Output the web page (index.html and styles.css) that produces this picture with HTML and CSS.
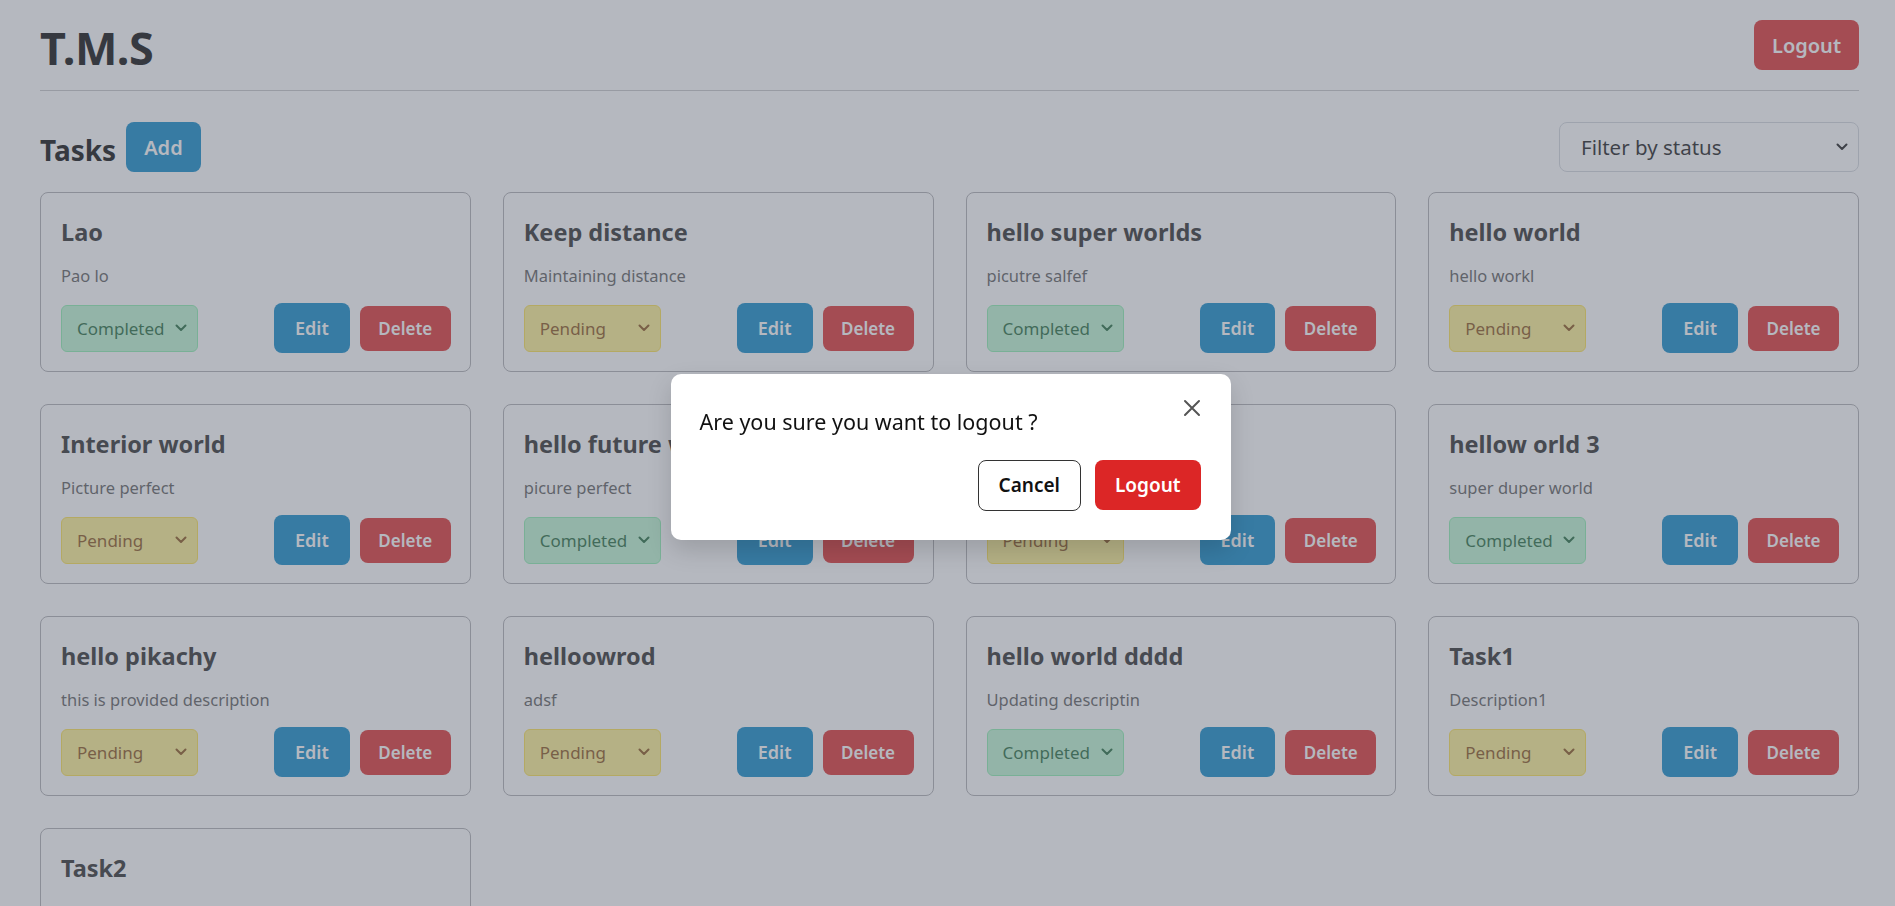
FILE: index.html
```html
<!DOCTYPE html>
<html lang="en">
<head>
<meta charset="utf-8">
<title>T.M.S</title>
<link rel="stylesheet" href="styles.css">
</head>
<body>
<div class="page">
  <header class="topbar">
    <h1 class="brand">T.M.S</h1>
    <button class="btn btn-red btn-lg">Logout</button>
  </header>

  <section class="toolbar">
    <div class="toolbar-left">
      <h2 class="section-title">Tasks</h2>
      <button class="btn btn-blue btn-lg">Add</button>
    </div>
    <select class="filter">
      <option>Filter by status</option>
      <option>Pending</option>
      <option>Completed</option>
    </select>
  </section>

  <div class="grid">
    <div class="card">
      <h3 class="card-title">Lao</h3>
      <p class="card-desc">Pao lo</p>
      <div class="card-actions">
        <select class="status status-done"><option>Completed</option><option>Pending</option></select>
        <div class="btn-group"><button class="btn btn-blue btn-edit">Edit</button><button class="btn btn-red btn-delete">Delete</button></div>
      </div>
    </div>
    <div class="card">
      <h3 class="card-title">Keep distance</h3>
      <p class="card-desc">Maintaining distance</p>
      <div class="card-actions">
        <select class="status status-pending"><option>Pending</option><option>Completed</option></select>
        <div class="btn-group"><button class="btn btn-blue btn-edit">Edit</button><button class="btn btn-red btn-delete">Delete</button></div>
      </div>
    </div>
    <div class="card">
      <h3 class="card-title">hello super worlds</h3>
      <p class="card-desc">picutre salfef</p>
      <div class="card-actions">
        <select class="status status-done"><option>Completed</option><option>Pending</option></select>
        <div class="btn-group"><button class="btn btn-blue btn-edit">Edit</button><button class="btn btn-red btn-delete">Delete</button></div>
      </div>
    </div>
    <div class="card">
      <h3 class="card-title">hello world</h3>
      <p class="card-desc">hello workl</p>
      <div class="card-actions">
        <select class="status status-pending"><option>Pending</option><option>Completed</option></select>
        <div class="btn-group"><button class="btn btn-blue btn-edit">Edit</button><button class="btn btn-red btn-delete">Delete</button></div>
      </div>
    </div>

    <div class="card">
      <h3 class="card-title">Interior world</h3>
      <p class="card-desc">Picture perfect</p>
      <div class="card-actions">
        <select class="status status-pending"><option>Pending</option><option>Completed</option></select>
        <div class="btn-group"><button class="btn btn-blue btn-edit">Edit</button><button class="btn btn-red btn-delete">Delete</button></div>
      </div>
    </div>
    <div class="card">
      <h3 class="card-title">hello future world</h3>
      <p class="card-desc">picure perfect</p>
      <div class="card-actions">
        <select class="status status-done"><option>Completed</option><option>Pending</option></select>
        <div class="btn-group"><button class="btn btn-blue btn-edit">Edit</button><button class="btn btn-red btn-delete">Delete</button></div>
      </div>
    </div>
    <div class="card">
      <h3 class="card-title">hello world 2</h3>
      <p class="card-desc">another description</p>
      <div class="card-actions">
        <select class="status status-pending"><option>Pending</option><option>Completed</option></select>
        <div class="btn-group"><button class="btn btn-blue btn-edit">Edit</button><button class="btn btn-red btn-delete">Delete</button></div>
      </div>
    </div>
    <div class="card">
      <h3 class="card-title">hellow orld 3</h3>
      <p class="card-desc">super duper world</p>
      <div class="card-actions">
        <select class="status status-done"><option>Completed</option><option>Pending</option></select>
        <div class="btn-group"><button class="btn btn-blue btn-edit">Edit</button><button class="btn btn-red btn-delete">Delete</button></div>
      </div>
    </div>

    <div class="card">
      <h3 class="card-title">hello pikachy</h3>
      <p class="card-desc">this is provided description</p>
      <div class="card-actions">
        <select class="status status-pending"><option>Pending</option><option>Completed</option></select>
        <div class="btn-group"><button class="btn btn-blue btn-edit">Edit</button><button class="btn btn-red btn-delete">Delete</button></div>
      </div>
    </div>
    <div class="card">
      <h3 class="card-title">helloowrod</h3>
      <p class="card-desc">adsf</p>
      <div class="card-actions">
        <select class="status status-pending"><option>Pending</option><option>Completed</option></select>
        <div class="btn-group"><button class="btn btn-blue btn-edit">Edit</button><button class="btn btn-red btn-delete">Delete</button></div>
      </div>
    </div>
    <div class="card">
      <h3 class="card-title">hello world dddd</h3>
      <p class="card-desc">Updating descriptin</p>
      <div class="card-actions">
        <select class="status status-done"><option>Completed</option><option>Pending</option></select>
        <div class="btn-group"><button class="btn btn-blue btn-edit">Edit</button><button class="btn btn-red btn-delete">Delete</button></div>
      </div>
    </div>
    <div class="card">
      <h3 class="card-title">Task1</h3>
      <p class="card-desc">Description1</p>
      <div class="card-actions">
        <select class="status status-pending"><option>Pending</option><option>Completed</option></select>
        <div class="btn-group"><button class="btn btn-blue btn-edit">Edit</button><button class="btn btn-red btn-delete">Delete</button></div>
      </div>
    </div>

    <div class="card">
      <h3 class="card-title">Task2</h3>
      <p class="card-desc">Description2</p>
      <div class="card-actions">
        <select class="status status-pending"><option>Pending</option><option>Completed</option></select>
        <div class="btn-group"><button class="btn btn-blue btn-edit">Edit</button><button class="btn btn-red btn-delete">Delete</button></div>
      </div>
    </div>
  </div>
</div>

<div class="overlay"></div>
<div class="modal-wrap">
  <div class="modal">
    <div class="modal-head">
      <p class="modal-text">Are you sure you want to logout ?</p>
      <button class="modal-close" aria-label="Close">
        <svg width="18" height="18" viewBox="0 0 18 18" fill="none" stroke="#555" stroke-width="2" stroke-linecap="round"><path d="M2 2 L16 16 M16 2 L2 16"/></svg>
      </button>
    </div>
    <div class="modal-actions">
      <button class="btn btn-outline">Cancel</button>
      <button class="btn btn-danger">Logout</button>
    </div>
  </div>
</div>
</body>
</html>
```

FILE: styles.css
```css
* { box-sizing: border-box; }

html, body {
  margin: 0;
  overflow: hidden;
  background: #ffffff;
  font-family: "Noto Sans", "Open Sans", sans-serif;
  color: #111;
}

.page {
  padding: 0 36px 0 40px;
}

.topbar {
  display: flex;
  justify-content: space-between;
  align-items: center;
  padding: 20px 0;
  border-bottom: 1px solid #c4c4c6;
}

.brand {
  margin: 6px 0 0;
  font-size: 45px;
  line-height: 44px;
  font-weight: 700;
  color: #000;
  letter-spacing: -0.5px;
}

.btn {
  font-family: inherit;
  border: none;
  cursor: pointer;
  color: #fff;
  font-weight: 600;
}

.btn-lg {
  height: 50px;
  padding: 0 18px;
  font-size: 20px;
  border-radius: 8px;
}

.btn-red { background: #dc2626; }
.btn-blue { background: #0284c7; }

.toolbar {
  margin-top: 31px;
  display: flex;
  justify-content: space-between;
  align-items: center;
}

.toolbar-left {
  display: flex;
  align-items: center;
  gap: 10px;
}

.section-title {
  margin: 0;
  padding-top: 5px;
  font-size: 28px;
  line-height: 40px;
  font-weight: 700;
  color: #000;
}

.filter {
  appearance: none;
  -webkit-appearance: none;
  width: 300px;
  height: 50px;
  padding: 0 40px 0 21px;
  font-family: inherit;
  font-size: 20.5px;
  color: #111;
  background: #fff url("data:image/svg+xml,%3Csvg xmlns='http://www.w3.org/2000/svg' width='12' height='8' viewBox='0 0 12 8'%3E%3Cpath d='M1.5 1.5 L6 6 L10.5 1.5' fill='none' stroke='%23111' stroke-width='2' stroke-linecap='round' stroke-linejoin='round'/%3E%3C/svg%3E") no-repeat right 10px center;
  border: 1px solid #d1d5db;
  border-radius: 8px;
}

.grid {
  margin-top: 20px;
  display: grid;
  grid-template-columns: repeat(4, 1fr);
  gap: 32px;
}

.card {
  border: 1px solid #aaaaae;
  border-radius: 8px;
  padding: 23px 19px 18px 20px;
  background: #fff;
}

.card-title {
  margin: 0 0 14px;
  font-size: 23.5px;
  line-height: 32px;
  font-weight: 700;
  color: #222;
}

.card-desc {
  margin: 0 0 13px;
  font-size: 16.5px;
  line-height: 28px;
  color: #555;
}

.card-actions {
  display: flex;
  justify-content: space-between;
  align-items: center;
  height: 50px;
}

.status {
  appearance: none;
  -webkit-appearance: none;
  width: 137px;
  height: 47px;
  padding: 0 26px 0 15px;
  font-family: inherit;
  font-size: 17px;
  border-radius: 6px;
  background-repeat: no-repeat;
  background-position: right 10px center;
}

.status-done {
  background-color: #bbf7d0;
  border: 1px solid #86efac;
  color: #166534;
  background-image: url("data:image/svg+xml,%3Csvg xmlns='http://www.w3.org/2000/svg' width='12' height='8' viewBox='0 0 12 8'%3E%3Cpath d='M1.5 1.5 L6 6 L10.5 1.5' fill='none' stroke='%23166534' stroke-width='2' stroke-linecap='round' stroke-linejoin='round'/%3E%3C/svg%3E");
}

.status-pending {
  background-color: #fef08a;
  border: 1px solid #fde047;
  color: #854d0e;
  background-image: url("data:image/svg+xml,%3Csvg xmlns='http://www.w3.org/2000/svg' width='12' height='8' viewBox='0 0 12 8'%3E%3Cpath d='M1.5 1.5 L6 6 L10.5 1.5' fill='none' stroke='%23854d0e' stroke-width='2' stroke-linecap='round' stroke-linejoin='round'/%3E%3C/svg%3E");
}

.btn-group {
  display: flex;
  align-items: center;
  gap: 10px;
}

.btn-edit {
  height: 50px;
  padding: 0 21px;
  font-size: 18px;
  border-radius: 8px;
}

.btn-delete {
  height: 45px;
  padding: 0 18.5px;
  font-size: 17px;
  border-radius: 8px;
}

.overlay {
  position: fixed;
  inset: 0;
  background: rgba(107, 114, 128, 0.5);
}

.modal-wrap {
  position: fixed;
  inset: 0;
  display: flex;
  align-items: center;
  justify-content: center;
}

.modal {
  width: 560px;
  margin: 7px 0 0 6px;
  background: #fff;
  border-radius: 10px;
  padding: 24px 30px 29px 29px;
  box-shadow: 0 10px 25px rgba(0, 0, 0, 0.15);
}

.modal-head {
  display: flex;
  justify-content: space-between;
  align-items: flex-start;
}

.modal-text {
  margin: 9px 0 0;
  font-size: 21.5px;
  line-height: 30px;
  color: #111;
}

.modal-close {
  background: none;
  border: none;
  padding: 0;
  margin: -2px -3px 0 0;
  width: 24px;
  height: 24px;
  display: flex;
  align-items: center;
  justify-content: center;
  cursor: pointer;
}

.modal-actions {
  margin-top: 23px;
  display: flex;
  justify-content: flex-end;
  gap: 14px;
}

.btn-outline {
  height: 51px;
  padding: 0 20px;
  font-size: 19px;
  color: #111;
  background: #fff;
  border: 1px solid #333;
  border-radius: 8px;
}

.btn-danger {
  height: 50px;
  padding: 0 20px;
  font-size: 19px;
  color: #fff;
  background: #dc2626;
  border-radius: 8px;
}
```
